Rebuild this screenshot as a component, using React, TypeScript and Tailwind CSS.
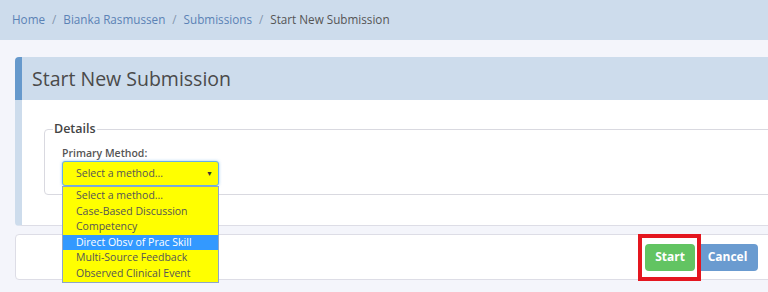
import React from 'react';

const methods = [
  'Select a method...',
  'Case-Based Discussion',
  'Competency',
  'Direct Obsv of Prac Skill',
  'Multi-Source Feedback',
  'Observed Clinical Event',
];

const crumbs = ['Home', 'Bianka Rasmussen', 'Submissions'];

const App: React.FC = () => {
  return (
    <div className="w-[768px] h-[292px] overflow-hidden bg-[#f4f5fb] font-['Open_Sans',sans-serif]">
      <nav className="h-[40px] bg-[#cddcec] flex items-center pl-[12px] text-[11.7px]">
        {crumbs.map((c) => (
          <React.Fragment key={c}>
            <span className="text-[#5b82b5]">{c}</span>
            <span className="px-[7px] text-[#8496ad]">/</span>
          </React.Fragment>
        ))}
        <span className="text-[#555]">Start New Submission</span>
      </nav>

      <div className="pl-[15px] pt-[17px]">
        <div className="w-[780px]">
          <div className="h-[43px] bg-[#cddcec] border-l-[7px] border-[#6699cc] rounded-tl-[4px] flex items-center pl-[10px]">
            <h1 className="text-[19.5px] text-[#4a4a4a]">Start New Submission</h1>
          </div>
          <div className="h-[126px] bg-white border-l-[7px] border-l-[#cddcec] border-b border-b-[#dddde6] rounded-bl-[4px] pl-[22px] pt-[21px]">
            <fieldset className="border border-[#d9d9e0] rounded-[4px] pb-[8px]">
              <legend className="ml-[8px] px-[1px] text-[12.5px] leading-[16px] font-semibold text-[#444]">Details</legend>
              <div className="pl-[17px]">
                <div className="pt-[10px] text-[10.5px] leading-[13px] font-semibold text-[#555]">Primary Method:</div>
                <div className="relative w-[157px] mt-[1px]">
                  <div className="h-[25px] bg-[#ffff00] border border-[#66afe9] rounded-[3px] shadow-[0_0_3px_rgba(102,175,233,0.7)] flex items-center pl-[13px] text-[10.5px] text-[#555]">
                    Select a method...
                    <span className="absolute right-[6px] top-[8px] text-[7px] text-[#333]">▼</span>
                  </div>
                  <ul className="absolute left-0 top-[25px] w-[157px] bg-[#ffff00] border border-[#8ea6c8] py-[1px] z-10">
                    {methods.map((m) => (
                      <li
                        key={m}
                        className={
                          m === 'Direct Obsv of Prac Skill'
                            ? 'h-[15.5px] leading-[15.5px] pl-[13px] text-[10.5px] bg-[#3399ff] text-white'
                            : 'h-[15.5px] leading-[15.5px] pl-[13px] text-[10.5px] text-[#555]'
                        }
                      >
                        {m}
                      </li>
                    ))}
                  </ul>
                </div>
              </div>
            </fieldset>
          </div>
        </div>

        <div className="mt-[8px] w-[780px] h-[46px] bg-white border border-[#dddde6] rounded-[4px] flex items-center justify-end pr-[36px] gap-[2px]">
          <div className="relative">
            <button className="w-[50px] h-[27px] rounded-[4px] bg-[#62c462] text-white text-[12px] font-bold">Start</button>
            <div className="absolute left-[-7px] right-[-6px] top-[-9px] bottom-[-10px] border-[4px] border-[#e4161f]" />
          </div>
          <button className="w-[61px] h-[27px] rounded-[4px] bg-[#6a9bd0] text-white text-[12px] font-bold">Cancel</button>
        </div>
      </div>
    </div>
  );
};

export default App;
